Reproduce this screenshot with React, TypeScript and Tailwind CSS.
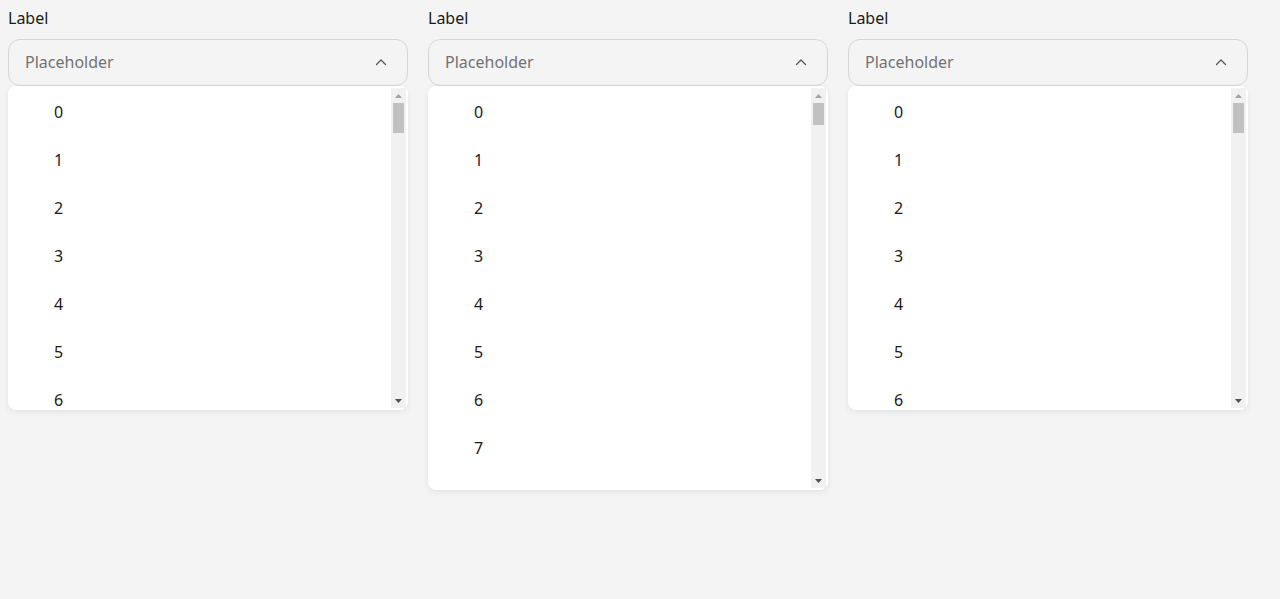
import React from "react";

function ChevronUp() {
  return (
    <svg width="12" height="8" viewBox="0 0 12 8" fill="none" className="shrink-0">
      <path d="M1.5 6.5 L6 2 L10.5 6.5" stroke="#555" strokeWidth="1.3" strokeLinecap="round" strokeLinejoin="round" />
    </svg>
  );
}

function Scrollbar({ thumbClass }: { thumbClass: string }) {
  return (
    <div className="flex w-[15px] shrink-0 flex-col bg-[#f1f1f1]">
      <div className="flex h-[15px] items-center justify-center">
        <svg width="7" height="4" viewBox="0 0 7 4">
          <polygon points="0,4 7,4 3.5,0" fill="#a3a3a3" />
        </svg>
      </div>
      <div className="flex-1 px-[2px]">
        <div className={`${thumbClass} w-full bg-[#c1c1c1]`} />
      </div>
      <div className="flex h-[15px] items-center justify-center">
        <svg width="7" height="4" viewBox="0 0 7 4">
          <polygon points="0,0 7,0 3.5,4" fill="#505050" />
        </svg>
      </div>
    </div>
  );
}

function SelectBox({ count, listHeight, thumbClass }: { count: number; listHeight: string; thumbClass: string }) {
  const items = Array.from({ length: count }, (_, i) => i);
  return (
    <div className="flex w-[400px] flex-col">
      <div className="text-[16px] leading-5 text-[#1a1a1a]">Label</div>
      <div className="mt-[11px] flex h-[47px] items-center justify-between rounded-[12px] border border-[#d6d6d6] bg-[#f4f4f4] pb-[2px] pl-4 pr-5">
        <span className="text-[16px] text-[#727272]">Placeholder</span>
        <ChevronUp />
      </div>
      <div className="rounded-lg bg-white p-0.5 shadow-[0_2px_6px_rgba(0,0,0,0.08)]">
        <div className={`${listHeight} flex`}>
          <div className="flex-1 overflow-hidden">
            {items.map((i) => (
              <div key={i} className="flex h-12 shrink-0 items-center pl-[44px] text-[16px] text-[#1a1a1a]">
                {i}
              </div>
            ))}
          </div>
          <Scrollbar thumbClass={thumbClass} />
        </div>
      </div>
    </div>
  );
}

export default function App() {
  return (
    <div className="min-h-screen bg-[#f4f4f4] p-2 font-['Noto_Sans',sans-serif]">
      <div className="flex items-start gap-5">
        <SelectBox count={7} listHeight="h-[320px]" thumbClass="h-[30px]" />
        <SelectBox count={8} listHeight="h-[400px]" thumbClass="h-[22px]" />
        <SelectBox count={7} listHeight="h-[320px]" thumbClass="h-[30px]" />
      </div>
    </div>
  );
}
